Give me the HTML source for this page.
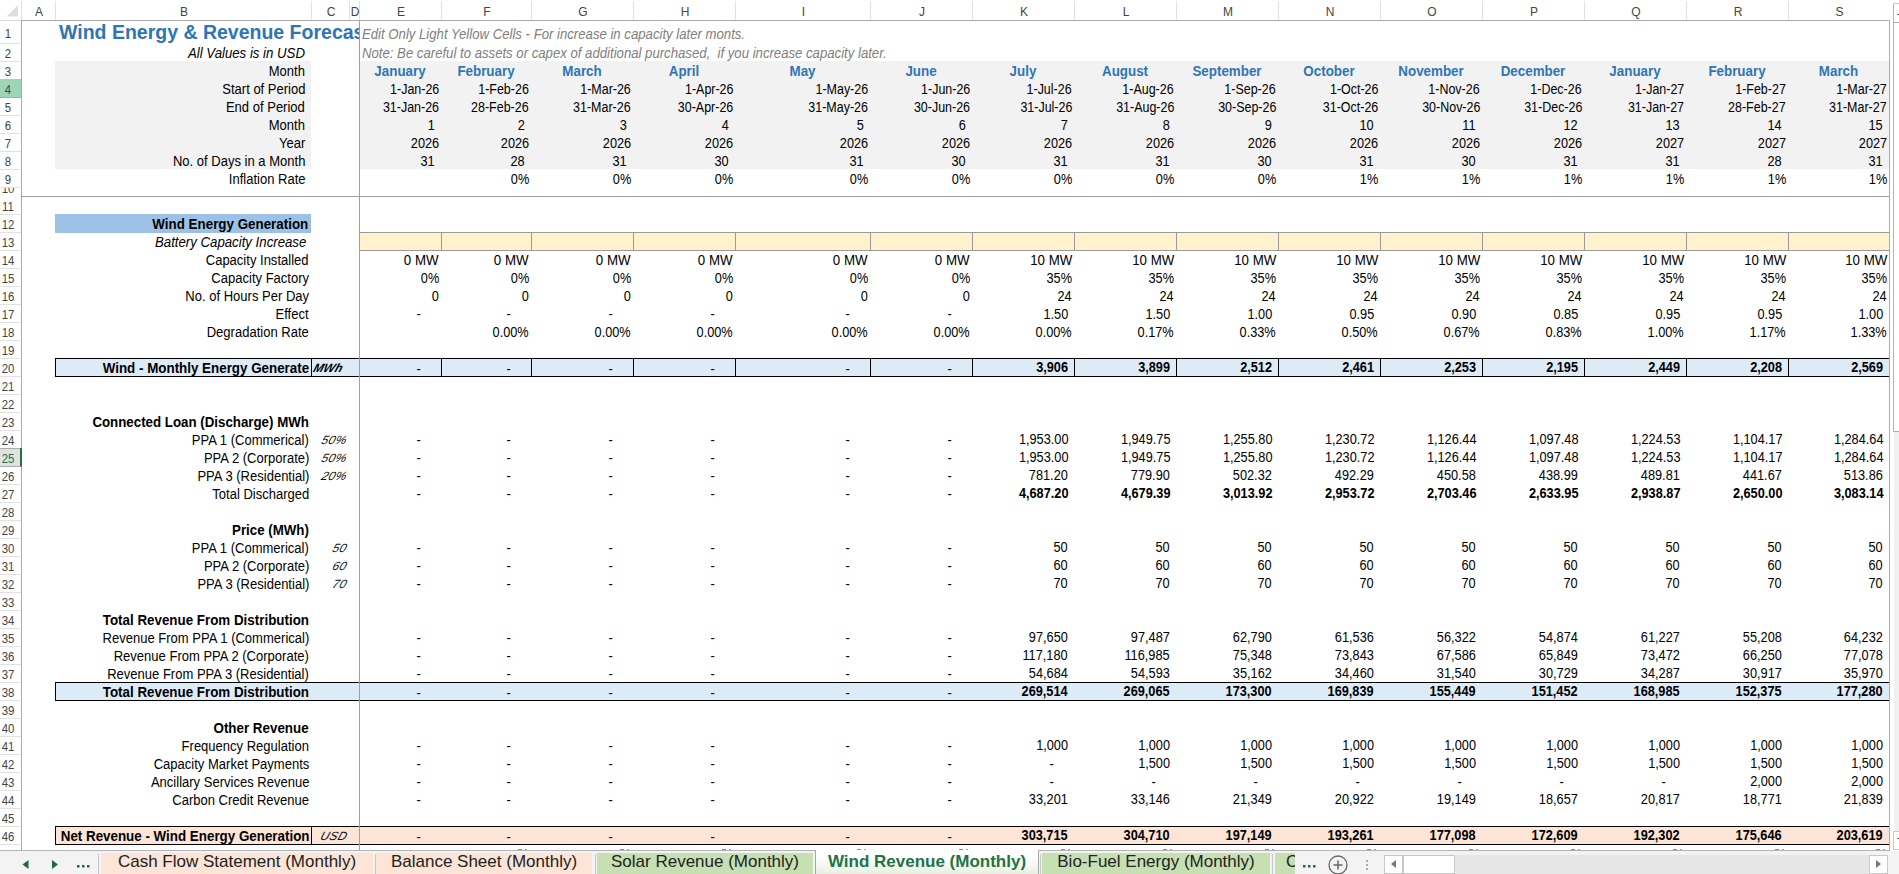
<!DOCTYPE html>
<html><head><meta charset="utf-8"><style>
html,body{margin:0;padding:0;}
body{width:1899px;height:874px;overflow:hidden;position:relative;background:#fff;font-family:"Liberation Sans", sans-serif;}
.grid{position:absolute;left:0;top:0;width:1899px;height:850px;overflow:hidden}
.t{position:absolute;white-space:nowrap;font-size:14px;line-height:18px;height:18px;color:#000}
.title{position:absolute;left:4px;top:0;white-space:nowrap;font-size:19.5px;line-height:23px;font-weight:bold;color:#2e75b6}
.note{color:#808080;font-style:italic;transform:scaleX(0.94);transform-origin:0 50%}
.unit{font-style:italic;font-size:12px;color:#111;letter-spacing:0.3px;transform:skewX(-18deg);transform-origin:0 100%}
.ch{position:absolute;top:2px;height:20px;line-height:20px;text-align:center;font-size:12px;color:#444}
.rh{position:absolute;left:0;width:16px;text-align:center;transform:scaleX(0.95);font-size:12px;color:#444;padding-top:2px;box-sizing:border-box}
.tab{position:absolute;top:852px;height:21px;line-height:20px;text-align:center;font-size:17px;color:#222;white-space:nowrap}
</style></head>
<body>
<div class="grid">
<div style="position:absolute;left:55px;top:61px;width:256px;height:108px;background:#f2f2f2;"></div>
<div style="position:absolute;left:360px;top:61px;width:1529px;height:108px;background:#f2f2f2;"></div>
<div style="position:absolute;left:55px;top:214px;width:256px;height:19px;background:#9bc2e6;"></div>
<div style="position:absolute;left:360px;top:232px;width:1529px;height:19px;background:#fff2cc;"></div>
<div style="position:absolute;left:360px;top:232px;width:1529px;height:1px;background:#9a9a9a;"></div>
<div style="position:absolute;left:360px;top:250px;width:1529px;height:1px;background:#9a9a9a;"></div>
<div style="position:absolute;left:441px;top:232px;width:1px;height:19px;background:#9a9a9a;"></div>
<div style="position:absolute;left:531px;top:232px;width:1px;height:19px;background:#9a9a9a;"></div>
<div style="position:absolute;left:633px;top:232px;width:1px;height:19px;background:#9a9a9a;"></div>
<div style="position:absolute;left:735px;top:232px;width:1px;height:19px;background:#9a9a9a;"></div>
<div style="position:absolute;left:870px;top:232px;width:1px;height:19px;background:#9a9a9a;"></div>
<div style="position:absolute;left:972px;top:232px;width:1px;height:19px;background:#9a9a9a;"></div>
<div style="position:absolute;left:1074px;top:232px;width:1px;height:19px;background:#9a9a9a;"></div>
<div style="position:absolute;left:1176px;top:232px;width:1px;height:19px;background:#9a9a9a;"></div>
<div style="position:absolute;left:1278px;top:232px;width:1px;height:19px;background:#9a9a9a;"></div>
<div style="position:absolute;left:1380px;top:232px;width:1px;height:19px;background:#9a9a9a;"></div>
<div style="position:absolute;left:1482px;top:232px;width:1px;height:19px;background:#9a9a9a;"></div>
<div style="position:absolute;left:1584px;top:232px;width:1px;height:19px;background:#9a9a9a;"></div>
<div style="position:absolute;left:1686px;top:232px;width:1px;height:19px;background:#9a9a9a;"></div>
<div style="position:absolute;left:1788px;top:232px;width:1px;height:19px;background:#9a9a9a;"></div>
<div style="position:absolute;left:55px;top:358px;width:1834px;height:19px;background:#ddebf7;"></div>
<div style="position:absolute;left:55px;top:358px;width:1834px;height:1px;background:#000;"></div>
<div style="position:absolute;left:55px;top:376px;width:1834px;height:1px;background:#000;"></div>
<div style="position:absolute;left:55px;top:358px;width:1px;height:19px;background:#000;"></div>
<div style="position:absolute;left:311px;top:358px;width:1px;height:19px;background:#000;"></div>
<div style="position:absolute;left:441px;top:358px;width:1px;height:19px;background:#000;"></div>
<div style="position:absolute;left:531px;top:358px;width:1px;height:19px;background:#000;"></div>
<div style="position:absolute;left:633px;top:358px;width:1px;height:19px;background:#000;"></div>
<div style="position:absolute;left:735px;top:358px;width:1px;height:19px;background:#000;"></div>
<div style="position:absolute;left:870px;top:358px;width:1px;height:19px;background:#000;"></div>
<div style="position:absolute;left:972px;top:358px;width:1px;height:19px;background:#000;"></div>
<div style="position:absolute;left:1074px;top:358px;width:1px;height:19px;background:#000;"></div>
<div style="position:absolute;left:1176px;top:358px;width:1px;height:19px;background:#000;"></div>
<div style="position:absolute;left:1278px;top:358px;width:1px;height:19px;background:#000;"></div>
<div style="position:absolute;left:1380px;top:358px;width:1px;height:19px;background:#000;"></div>
<div style="position:absolute;left:1482px;top:358px;width:1px;height:19px;background:#000;"></div>
<div style="position:absolute;left:1584px;top:358px;width:1px;height:19px;background:#000;"></div>
<div style="position:absolute;left:1686px;top:358px;width:1px;height:19px;background:#000;"></div>
<div style="position:absolute;left:1788px;top:358px;width:1px;height:19px;background:#000;"></div>
<div style="position:absolute;left:55px;top:682px;width:1834px;height:19px;background:#ddebf7;"></div>
<div style="position:absolute;left:55px;top:682px;width:1834px;height:1px;background:#000;"></div>
<div style="position:absolute;left:55px;top:700px;width:1834px;height:1px;background:#000;"></div>
<div style="position:absolute;left:55px;top:682px;width:1px;height:19px;background:#000;"></div>
<div style="position:absolute;left:55px;top:826px;width:1834px;height:19px;background:#fce4d6;"></div>
<div style="position:absolute;left:55px;top:826px;width:1834px;height:1px;background:#000;"></div>
<div style="position:absolute;left:55px;top:844px;width:1834px;height:1px;background:#000;"></div>
<div style="position:absolute;left:55px;top:826px;width:1px;height:19px;background:#000;"></div>
<div style="position:absolute;left:311px;top:826px;width:1px;height:19px;background:#000;"></div>
<div style="position:absolute;left:55px;top:21px;width:304px;height:23px;overflow:hidden"><div class="title">Wind Energy &amp; Revenue Forecast</div></div>
<div class="t note" style="top:25px;left:362px">Edit Only Light Yellow Cells - For increase in capacity later monts.</div>
<div class="t note" style="top:44px;left:362px">Note: Be careful to assets or capex of additional purchased,&nbsp; if you increase capacity later.</div>
<div class="t" style="top:44px;font-style:italic;right:1594px;transform:scaleX(0.944);transform-origin:100% 50%">All Values is in USD</div>
<div class="t" style="top:62px;right:1594px;transform:scaleX(0.93);transform-origin:100% 50%">Month</div>
<div class="t" style="top:80px;right:1594px;transform:scaleX(0.93);transform-origin:100% 50%">Start of Period</div>
<div class="t" style="top:98px;right:1594px;transform:scaleX(0.93);transform-origin:100% 50%">End of Period</div>
<div class="t" style="top:116px;right:1594px;transform:scaleX(0.93);transform-origin:100% 50%">Month</div>
<div class="t" style="top:134px;right:1594px;transform:scaleX(0.93);transform-origin:100% 50%">Year</div>
<div class="t" style="top:152px;right:1594px;transform:scaleX(0.93);transform-origin:100% 50%">No. of Days in a Month</div>
<div class="t" style="top:170px;right:1594px;transform:scaleX(0.93);transform-origin:100% 50%">Inflation Rate</div>
<div class="t" style="top:62px;font-weight:bold;color:#2e75b6;left:359px;width:82px;text-align:center;transform:scaleX(0.955);transform-origin:50% 50%">January</div>
<div class="t" style="top:80px;right:1460px;transform:scaleX(0.89);transform-origin:100% 50%">1-Jan-26</div>
<div class="t" style="top:98px;right:1460px;transform:scaleX(0.89);transform-origin:100% 50%">31-Jan-26</div>
<div class="t" style="top:116px;right:1464px;transform:scaleX(0.91);transform-origin:100% 50%">1</div>
<div class="t" style="top:134px;right:1460px;transform:scaleX(0.91);transform-origin:100% 50%">2026</div>
<div class="t" style="top:152px;right:1464px;transform:scaleX(0.91);transform-origin:100% 50%">31</div>
<div class="t" style="top:62px;font-weight:bold;color:#2e75b6;left:441px;width:90px;text-align:center;transform:scaleX(0.955);transform-origin:50% 50%">February</div>
<div class="t" style="top:80px;right:1370px;transform:scaleX(0.89);transform-origin:100% 50%">1-Feb-26</div>
<div class="t" style="top:98px;right:1370px;transform:scaleX(0.89);transform-origin:100% 50%">28-Feb-26</div>
<div class="t" style="top:116px;right:1374px;transform:scaleX(0.91);transform-origin:100% 50%">2</div>
<div class="t" style="top:134px;right:1370px;transform:scaleX(0.91);transform-origin:100% 50%">2026</div>
<div class="t" style="top:152px;right:1374px;transform:scaleX(0.91);transform-origin:100% 50%">28</div>
<div class="t" style="top:170px;right:1370px;transform:scaleX(0.91);transform-origin:100% 50%">0%</div>
<div class="t" style="top:62px;font-weight:bold;color:#2e75b6;left:531px;width:102px;text-align:center;transform:scaleX(0.955);transform-origin:50% 50%">March</div>
<div class="t" style="top:80px;right:1268px;transform:scaleX(0.89);transform-origin:100% 50%">1-Mar-26</div>
<div class="t" style="top:98px;right:1268px;transform:scaleX(0.89);transform-origin:100% 50%">31-Mar-26</div>
<div class="t" style="top:116px;right:1272px;transform:scaleX(0.91);transform-origin:100% 50%">3</div>
<div class="t" style="top:134px;right:1268px;transform:scaleX(0.91);transform-origin:100% 50%">2026</div>
<div class="t" style="top:152px;right:1272px;transform:scaleX(0.91);transform-origin:100% 50%">31</div>
<div class="t" style="top:170px;right:1268px;transform:scaleX(0.91);transform-origin:100% 50%">0%</div>
<div class="t" style="top:62px;font-weight:bold;color:#2e75b6;left:633px;width:102px;text-align:center;transform:scaleX(0.955);transform-origin:50% 50%">April</div>
<div class="t" style="top:80px;right:1166px;transform:scaleX(0.89);transform-origin:100% 50%">1-Apr-26</div>
<div class="t" style="top:98px;right:1166px;transform:scaleX(0.89);transform-origin:100% 50%">30-Apr-26</div>
<div class="t" style="top:116px;right:1170px;transform:scaleX(0.91);transform-origin:100% 50%">4</div>
<div class="t" style="top:134px;right:1166px;transform:scaleX(0.91);transform-origin:100% 50%">2026</div>
<div class="t" style="top:152px;right:1170px;transform:scaleX(0.91);transform-origin:100% 50%">30</div>
<div class="t" style="top:170px;right:1166px;transform:scaleX(0.91);transform-origin:100% 50%">0%</div>
<div class="t" style="top:62px;font-weight:bold;color:#2e75b6;left:735px;width:135px;text-align:center;transform:scaleX(0.955);transform-origin:50% 50%">May</div>
<div class="t" style="top:80px;right:1031px;transform:scaleX(0.89);transform-origin:100% 50%">1-May-26</div>
<div class="t" style="top:98px;right:1031px;transform:scaleX(0.89);transform-origin:100% 50%">31-May-26</div>
<div class="t" style="top:116px;right:1035px;transform:scaleX(0.91);transform-origin:100% 50%">5</div>
<div class="t" style="top:134px;right:1031px;transform:scaleX(0.91);transform-origin:100% 50%">2026</div>
<div class="t" style="top:152px;right:1035px;transform:scaleX(0.91);transform-origin:100% 50%">31</div>
<div class="t" style="top:170px;right:1031px;transform:scaleX(0.91);transform-origin:100% 50%">0%</div>
<div class="t" style="top:62px;font-weight:bold;color:#2e75b6;left:870px;width:102px;text-align:center;transform:scaleX(0.955);transform-origin:50% 50%">June</div>
<div class="t" style="top:80px;right:929px;transform:scaleX(0.89);transform-origin:100% 50%">1-Jun-26</div>
<div class="t" style="top:98px;right:929px;transform:scaleX(0.89);transform-origin:100% 50%">30-Jun-26</div>
<div class="t" style="top:116px;right:933px;transform:scaleX(0.91);transform-origin:100% 50%">6</div>
<div class="t" style="top:134px;right:929px;transform:scaleX(0.91);transform-origin:100% 50%">2026</div>
<div class="t" style="top:152px;right:933px;transform:scaleX(0.91);transform-origin:100% 50%">30</div>
<div class="t" style="top:170px;right:929px;transform:scaleX(0.91);transform-origin:100% 50%">0%</div>
<div class="t" style="top:62px;font-weight:bold;color:#2e75b6;left:972px;width:102px;text-align:center;transform:scaleX(0.955);transform-origin:50% 50%">July</div>
<div class="t" style="top:80px;right:827px;transform:scaleX(0.89);transform-origin:100% 50%">1-Jul-26</div>
<div class="t" style="top:98px;right:827px;transform:scaleX(0.89);transform-origin:100% 50%">31-Jul-26</div>
<div class="t" style="top:116px;right:831px;transform:scaleX(0.91);transform-origin:100% 50%">7</div>
<div class="t" style="top:134px;right:827px;transform:scaleX(0.91);transform-origin:100% 50%">2026</div>
<div class="t" style="top:152px;right:831px;transform:scaleX(0.91);transform-origin:100% 50%">31</div>
<div class="t" style="top:170px;right:827px;transform:scaleX(0.91);transform-origin:100% 50%">0%</div>
<div class="t" style="top:62px;font-weight:bold;color:#2e75b6;left:1074px;width:102px;text-align:center;transform:scaleX(0.955);transform-origin:50% 50%">August</div>
<div class="t" style="top:80px;right:725px;transform:scaleX(0.89);transform-origin:100% 50%">1-Aug-26</div>
<div class="t" style="top:98px;right:725px;transform:scaleX(0.89);transform-origin:100% 50%">31-Aug-26</div>
<div class="t" style="top:116px;right:729px;transform:scaleX(0.91);transform-origin:100% 50%">8</div>
<div class="t" style="top:134px;right:725px;transform:scaleX(0.91);transform-origin:100% 50%">2026</div>
<div class="t" style="top:152px;right:729px;transform:scaleX(0.91);transform-origin:100% 50%">31</div>
<div class="t" style="top:170px;right:725px;transform:scaleX(0.91);transform-origin:100% 50%">0%</div>
<div class="t" style="top:62px;font-weight:bold;color:#2e75b6;left:1176px;width:102px;text-align:center;transform:scaleX(0.955);transform-origin:50% 50%">September</div>
<div class="t" style="top:80px;right:623px;transform:scaleX(0.89);transform-origin:100% 50%">1-Sep-26</div>
<div class="t" style="top:98px;right:623px;transform:scaleX(0.89);transform-origin:100% 50%">30-Sep-26</div>
<div class="t" style="top:116px;right:627px;transform:scaleX(0.91);transform-origin:100% 50%">9</div>
<div class="t" style="top:134px;right:623px;transform:scaleX(0.91);transform-origin:100% 50%">2026</div>
<div class="t" style="top:152px;right:627px;transform:scaleX(0.91);transform-origin:100% 50%">30</div>
<div class="t" style="top:170px;right:623px;transform:scaleX(0.91);transform-origin:100% 50%">0%</div>
<div class="t" style="top:62px;font-weight:bold;color:#2e75b6;left:1278px;width:102px;text-align:center;transform:scaleX(0.955);transform-origin:50% 50%">October</div>
<div class="t" style="top:80px;right:521px;transform:scaleX(0.89);transform-origin:100% 50%">1-Oct-26</div>
<div class="t" style="top:98px;right:521px;transform:scaleX(0.89);transform-origin:100% 50%">31-Oct-26</div>
<div class="t" style="top:116px;right:525px;transform:scaleX(0.91);transform-origin:100% 50%">10</div>
<div class="t" style="top:134px;right:521px;transform:scaleX(0.91);transform-origin:100% 50%">2026</div>
<div class="t" style="top:152px;right:525px;transform:scaleX(0.91);transform-origin:100% 50%">31</div>
<div class="t" style="top:170px;right:521px;transform:scaleX(0.91);transform-origin:100% 50%">1%</div>
<div class="t" style="top:62px;font-weight:bold;color:#2e75b6;left:1380px;width:102px;text-align:center;transform:scaleX(0.955);transform-origin:50% 50%">November</div>
<div class="t" style="top:80px;right:419px;transform:scaleX(0.89);transform-origin:100% 50%">1-Nov-26</div>
<div class="t" style="top:98px;right:419px;transform:scaleX(0.89);transform-origin:100% 50%">30-Nov-26</div>
<div class="t" style="top:116px;right:423px;transform:scaleX(0.91);transform-origin:100% 50%">11</div>
<div class="t" style="top:134px;right:419px;transform:scaleX(0.91);transform-origin:100% 50%">2026</div>
<div class="t" style="top:152px;right:423px;transform:scaleX(0.91);transform-origin:100% 50%">30</div>
<div class="t" style="top:170px;right:419px;transform:scaleX(0.91);transform-origin:100% 50%">1%</div>
<div class="t" style="top:62px;font-weight:bold;color:#2e75b6;left:1482px;width:102px;text-align:center;transform:scaleX(0.955);transform-origin:50% 50%">December</div>
<div class="t" style="top:80px;right:317px;transform:scaleX(0.89);transform-origin:100% 50%">1-Dec-26</div>
<div class="t" style="top:98px;right:317px;transform:scaleX(0.89);transform-origin:100% 50%">31-Dec-26</div>
<div class="t" style="top:116px;right:321px;transform:scaleX(0.91);transform-origin:100% 50%">12</div>
<div class="t" style="top:134px;right:317px;transform:scaleX(0.91);transform-origin:100% 50%">2026</div>
<div class="t" style="top:152px;right:321px;transform:scaleX(0.91);transform-origin:100% 50%">31</div>
<div class="t" style="top:170px;right:317px;transform:scaleX(0.91);transform-origin:100% 50%">1%</div>
<div class="t" style="top:62px;font-weight:bold;color:#2e75b6;left:1584px;width:102px;text-align:center;transform:scaleX(0.955);transform-origin:50% 50%">January</div>
<div class="t" style="top:80px;right:215px;transform:scaleX(0.89);transform-origin:100% 50%">1-Jan-27</div>
<div class="t" style="top:98px;right:215px;transform:scaleX(0.89);transform-origin:100% 50%">31-Jan-27</div>
<div class="t" style="top:116px;right:219px;transform:scaleX(0.91);transform-origin:100% 50%">13</div>
<div class="t" style="top:134px;right:215px;transform:scaleX(0.91);transform-origin:100% 50%">2027</div>
<div class="t" style="top:152px;right:219px;transform:scaleX(0.91);transform-origin:100% 50%">31</div>
<div class="t" style="top:170px;right:215px;transform:scaleX(0.91);transform-origin:100% 50%">1%</div>
<div class="t" style="top:62px;font-weight:bold;color:#2e75b6;left:1686px;width:102px;text-align:center;transform:scaleX(0.955);transform-origin:50% 50%">February</div>
<div class="t" style="top:80px;right:113px;transform:scaleX(0.89);transform-origin:100% 50%">1-Feb-27</div>
<div class="t" style="top:98px;right:113px;transform:scaleX(0.89);transform-origin:100% 50%">28-Feb-27</div>
<div class="t" style="top:116px;right:117px;transform:scaleX(0.91);transform-origin:100% 50%">14</div>
<div class="t" style="top:134px;right:113px;transform:scaleX(0.91);transform-origin:100% 50%">2027</div>
<div class="t" style="top:152px;right:117px;transform:scaleX(0.91);transform-origin:100% 50%">28</div>
<div class="t" style="top:170px;right:113px;transform:scaleX(0.91);transform-origin:100% 50%">1%</div>
<div class="t" style="top:62px;font-weight:bold;color:#2e75b6;left:1788px;width:101px;text-align:center;transform:scaleX(0.955);transform-origin:50% 50%">March</div>
<div class="t" style="top:80px;right:12px;transform:scaleX(0.89);transform-origin:100% 50%">1-Mar-27</div>
<div class="t" style="top:98px;right:12px;transform:scaleX(0.89);transform-origin:100% 50%">31-Mar-27</div>
<div class="t" style="top:116px;right:16px;transform:scaleX(0.91);transform-origin:100% 50%">15</div>
<div class="t" style="top:134px;right:12px;transform:scaleX(0.91);transform-origin:100% 50%">2027</div>
<div class="t" style="top:152px;right:16px;transform:scaleX(0.91);transform-origin:100% 50%">31</div>
<div class="t" style="top:170px;right:12px;transform:scaleX(0.91);transform-origin:100% 50%">1%</div>
<div class="t" style="top:215px;font-weight:bold;right:1591px;transform:scaleX(0.955);transform-origin:100% 50%">Wind Energy Generation</div>
<div class="t" style="top:233px;font-style:italic;right:1593px;transform:scaleX(0.944);transform-origin:100% 50%">Battery Capacity Increase</div>
<div class="t" style="top:251px;right:1590px;transform:scaleX(0.93);transform-origin:100% 50%">Capacity Installed</div>
<div class="t" style="top:269px;right:1590px;transform:scaleX(0.93);transform-origin:100% 50%">Capacity Factory</div>
<div class="t" style="top:287px;right:1590px;transform:scaleX(0.93);transform-origin:100% 50%">No. of Hours Per Day</div>
<div class="t" style="top:305px;right:1590px;transform:scaleX(0.93);transform-origin:100% 50%">Effect</div>
<div class="t" style="top:323px;right:1590px;transform:scaleX(0.93);transform-origin:100% 50%">Degradation Rate</div>
<div class="t" style="top:251px;right:1460px;transform:scaleX(0.95);transform-origin:100% 50%">0 MW</div>
<div class="t" style="top:269px;right:1460px;transform:scaleX(0.91);transform-origin:100% 50%">0%</div>
<div class="t" style="top:287px;right:1460px;transform:scaleX(0.91);transform-origin:100% 50%">0</div>
<div class="t" style="top:305px;right:1478px;transform:scaleX(0.91);transform-origin:100% 50%">-</div>
<div class="t" style="top:251px;right:1370px;transform:scaleX(0.95);transform-origin:100% 50%">0 MW</div>
<div class="t" style="top:269px;right:1370px;transform:scaleX(0.91);transform-origin:100% 50%">0%</div>
<div class="t" style="top:287px;right:1370px;transform:scaleX(0.91);transform-origin:100% 50%">0</div>
<div class="t" style="top:305px;right:1388px;transform:scaleX(0.91);transform-origin:100% 50%">-</div>
<div class="t" style="top:323px;right:1370px;transform:scaleX(0.91);transform-origin:100% 50%">0.00%</div>
<div class="t" style="top:251px;right:1268px;transform:scaleX(0.95);transform-origin:100% 50%">0 MW</div>
<div class="t" style="top:269px;right:1268px;transform:scaleX(0.91);transform-origin:100% 50%">0%</div>
<div class="t" style="top:287px;right:1268px;transform:scaleX(0.91);transform-origin:100% 50%">0</div>
<div class="t" style="top:305px;right:1286px;transform:scaleX(0.91);transform-origin:100% 50%">-</div>
<div class="t" style="top:323px;right:1268px;transform:scaleX(0.91);transform-origin:100% 50%">0.00%</div>
<div class="t" style="top:251px;right:1166px;transform:scaleX(0.95);transform-origin:100% 50%">0 MW</div>
<div class="t" style="top:269px;right:1166px;transform:scaleX(0.91);transform-origin:100% 50%">0%</div>
<div class="t" style="top:287px;right:1166px;transform:scaleX(0.91);transform-origin:100% 50%">0</div>
<div class="t" style="top:305px;right:1184px;transform:scaleX(0.91);transform-origin:100% 50%">-</div>
<div class="t" style="top:323px;right:1166px;transform:scaleX(0.91);transform-origin:100% 50%">0.00%</div>
<div class="t" style="top:251px;right:1031px;transform:scaleX(0.95);transform-origin:100% 50%">0 MW</div>
<div class="t" style="top:269px;right:1031px;transform:scaleX(0.91);transform-origin:100% 50%">0%</div>
<div class="t" style="top:287px;right:1031px;transform:scaleX(0.91);transform-origin:100% 50%">0</div>
<div class="t" style="top:305px;right:1049px;transform:scaleX(0.91);transform-origin:100% 50%">-</div>
<div class="t" style="top:323px;right:1031px;transform:scaleX(0.91);transform-origin:100% 50%">0.00%</div>
<div class="t" style="top:251px;right:929px;transform:scaleX(0.95);transform-origin:100% 50%">0 MW</div>
<div class="t" style="top:269px;right:929px;transform:scaleX(0.91);transform-origin:100% 50%">0%</div>
<div class="t" style="top:287px;right:929px;transform:scaleX(0.91);transform-origin:100% 50%">0</div>
<div class="t" style="top:305px;right:947px;transform:scaleX(0.91);transform-origin:100% 50%">-</div>
<div class="t" style="top:323px;right:929px;transform:scaleX(0.91);transform-origin:100% 50%">0.00%</div>
<div class="t" style="top:251px;right:827px;transform:scaleX(0.95);transform-origin:100% 50%">10 MW</div>
<div class="t" style="top:269px;right:827px;transform:scaleX(0.91);transform-origin:100% 50%">35%</div>
<div class="t" style="top:287px;right:827px;transform:scaleX(0.91);transform-origin:100% 50%">24</div>
<div class="t" style="top:305px;right:831px;transform:scaleX(0.91);transform-origin:100% 50%">1.50</div>
<div class="t" style="top:323px;right:827px;transform:scaleX(0.91);transform-origin:100% 50%">0.00%</div>
<div class="t" style="top:251px;right:725px;transform:scaleX(0.95);transform-origin:100% 50%">10 MW</div>
<div class="t" style="top:269px;right:725px;transform:scaleX(0.91);transform-origin:100% 50%">35%</div>
<div class="t" style="top:287px;right:725px;transform:scaleX(0.91);transform-origin:100% 50%">24</div>
<div class="t" style="top:305px;right:729px;transform:scaleX(0.91);transform-origin:100% 50%">1.50</div>
<div class="t" style="top:323px;right:725px;transform:scaleX(0.91);transform-origin:100% 50%">0.17%</div>
<div class="t" style="top:251px;right:623px;transform:scaleX(0.95);transform-origin:100% 50%">10 MW</div>
<div class="t" style="top:269px;right:623px;transform:scaleX(0.91);transform-origin:100% 50%">35%</div>
<div class="t" style="top:287px;right:623px;transform:scaleX(0.91);transform-origin:100% 50%">24</div>
<div class="t" style="top:305px;right:627px;transform:scaleX(0.91);transform-origin:100% 50%">1.00</div>
<div class="t" style="top:323px;right:623px;transform:scaleX(0.91);transform-origin:100% 50%">0.33%</div>
<div class="t" style="top:251px;right:521px;transform:scaleX(0.95);transform-origin:100% 50%">10 MW</div>
<div class="t" style="top:269px;right:521px;transform:scaleX(0.91);transform-origin:100% 50%">35%</div>
<div class="t" style="top:287px;right:521px;transform:scaleX(0.91);transform-origin:100% 50%">24</div>
<div class="t" style="top:305px;right:525px;transform:scaleX(0.91);transform-origin:100% 50%">0.95</div>
<div class="t" style="top:323px;right:521px;transform:scaleX(0.91);transform-origin:100% 50%">0.50%</div>
<div class="t" style="top:251px;right:419px;transform:scaleX(0.95);transform-origin:100% 50%">10 MW</div>
<div class="t" style="top:269px;right:419px;transform:scaleX(0.91);transform-origin:100% 50%">35%</div>
<div class="t" style="top:287px;right:419px;transform:scaleX(0.91);transform-origin:100% 50%">24</div>
<div class="t" style="top:305px;right:423px;transform:scaleX(0.91);transform-origin:100% 50%">0.90</div>
<div class="t" style="top:323px;right:419px;transform:scaleX(0.91);transform-origin:100% 50%">0.67%</div>
<div class="t" style="top:251px;right:317px;transform:scaleX(0.95);transform-origin:100% 50%">10 MW</div>
<div class="t" style="top:269px;right:317px;transform:scaleX(0.91);transform-origin:100% 50%">35%</div>
<div class="t" style="top:287px;right:317px;transform:scaleX(0.91);transform-origin:100% 50%">24</div>
<div class="t" style="top:305px;right:321px;transform:scaleX(0.91);transform-origin:100% 50%">0.85</div>
<div class="t" style="top:323px;right:317px;transform:scaleX(0.91);transform-origin:100% 50%">0.83%</div>
<div class="t" style="top:251px;right:215px;transform:scaleX(0.95);transform-origin:100% 50%">10 MW</div>
<div class="t" style="top:269px;right:215px;transform:scaleX(0.91);transform-origin:100% 50%">35%</div>
<div class="t" style="top:287px;right:215px;transform:scaleX(0.91);transform-origin:100% 50%">24</div>
<div class="t" style="top:305px;right:219px;transform:scaleX(0.91);transform-origin:100% 50%">0.95</div>
<div class="t" style="top:323px;right:215px;transform:scaleX(0.91);transform-origin:100% 50%">1.00%</div>
<div class="t" style="top:251px;right:113px;transform:scaleX(0.95);transform-origin:100% 50%">10 MW</div>
<div class="t" style="top:269px;right:113px;transform:scaleX(0.91);transform-origin:100% 50%">35%</div>
<div class="t" style="top:287px;right:113px;transform:scaleX(0.91);transform-origin:100% 50%">24</div>
<div class="t" style="top:305px;right:117px;transform:scaleX(0.91);transform-origin:100% 50%">0.95</div>
<div class="t" style="top:323px;right:113px;transform:scaleX(0.91);transform-origin:100% 50%">1.17%</div>
<div class="t" style="top:251px;right:12px;transform:scaleX(0.95);transform-origin:100% 50%">10 MW</div>
<div class="t" style="top:269px;right:12px;transform:scaleX(0.91);transform-origin:100% 50%">35%</div>
<div class="t" style="top:287px;right:12px;transform:scaleX(0.91);transform-origin:100% 50%">24</div>
<div class="t" style="top:305px;right:16px;transform:scaleX(0.91);transform-origin:100% 50%">1.00</div>
<div class="t" style="top:323px;right:12px;transform:scaleX(0.91);transform-origin:100% 50%">1.33%</div>
<div class="t" style="top:359px;font-weight:bold;right:1590px;transform:scaleX(0.955);transform-origin:100% 50%">Wind - Monthly Energy Generate</div>
<div class="t unit" style="top:359px;left:311px;font-weight:bold;color:#000;letter-spacing:0">MWh</div>
<div class="t" style="top:360px;right:1478px;transform:scaleX(0.91);transform-origin:100% 50%">-</div>
<div class="t" style="top:360px;right:1388px;transform:scaleX(0.91);transform-origin:100% 50%">-</div>
<div class="t" style="top:360px;right:1286px;transform:scaleX(0.91);transform-origin:100% 50%">-</div>
<div class="t" style="top:360px;right:1184px;transform:scaleX(0.91);transform-origin:100% 50%">-</div>
<div class="t" style="top:360px;right:1049px;transform:scaleX(0.91);transform-origin:100% 50%">-</div>
<div class="t" style="top:360px;right:947px;transform:scaleX(0.91);transform-origin:100% 50%">-</div>
<div class="t" style="top:358px;font-weight:bold;right:831px;transform:scaleX(0.91);transform-origin:100% 50%">3,906</div>
<div class="t" style="top:358px;font-weight:bold;right:729px;transform:scaleX(0.91);transform-origin:100% 50%">3,899</div>
<div class="t" style="top:358px;font-weight:bold;right:627px;transform:scaleX(0.91);transform-origin:100% 50%">2,512</div>
<div class="t" style="top:358px;font-weight:bold;right:525px;transform:scaleX(0.91);transform-origin:100% 50%">2,461</div>
<div class="t" style="top:358px;font-weight:bold;right:423px;transform:scaleX(0.91);transform-origin:100% 50%">2,253</div>
<div class="t" style="top:358px;font-weight:bold;right:321px;transform:scaleX(0.91);transform-origin:100% 50%">2,195</div>
<div class="t" style="top:358px;font-weight:bold;right:219px;transform:scaleX(0.91);transform-origin:100% 50%">2,449</div>
<div class="t" style="top:358px;font-weight:bold;right:117px;transform:scaleX(0.91);transform-origin:100% 50%">2,208</div>
<div class="t" style="top:358px;font-weight:bold;right:16px;transform:scaleX(0.91);transform-origin:100% 50%">2,569</div>
<div class="t" style="top:413px;font-weight:bold;right:1590px;transform:scaleX(0.95);transform-origin:100% 50%">Connected Loan (Discharge) MWh</div>
<div class="t" style="top:431px;right:1590px;transform:scaleX(0.93);transform-origin:100% 50%">PPA 1 (Commerical)</div>
<div class="t" style="top:449px;right:1590px;transform:scaleX(0.93);transform-origin:100% 50%">PPA 2 (Corporate)</div>
<div class="t" style="top:467px;right:1590px;transform:scaleX(0.93);transform-origin:100% 50%">PPA 3 (Residential)</div>
<div class="t" style="top:485px;right:1590px;transform:scaleX(0.93);transform-origin:100% 50%">Total Discharged</div>
<div class="t unit" style="top:431px;right:1555px">50%</div>
<div class="t unit" style="top:449px;right:1555px">50%</div>
<div class="t unit" style="top:467px;right:1555px">20%</div>
<div class="t" style="top:431px;right:1478px;transform:scaleX(0.91);transform-origin:100% 50%">-</div>
<div class="t" style="top:449px;right:1478px;transform:scaleX(0.91);transform-origin:100% 50%">-</div>
<div class="t" style="top:467px;right:1478px;transform:scaleX(0.91);transform-origin:100% 50%">-</div>
<div class="t" style="top:485px;right:1478px;transform:scaleX(0.91);transform-origin:100% 50%">-</div>
<div class="t" style="top:431px;right:1388px;transform:scaleX(0.91);transform-origin:100% 50%">-</div>
<div class="t" style="top:449px;right:1388px;transform:scaleX(0.91);transform-origin:100% 50%">-</div>
<div class="t" style="top:467px;right:1388px;transform:scaleX(0.91);transform-origin:100% 50%">-</div>
<div class="t" style="top:485px;right:1388px;transform:scaleX(0.91);transform-origin:100% 50%">-</div>
<div class="t" style="top:431px;right:1286px;transform:scaleX(0.91);transform-origin:100% 50%">-</div>
<div class="t" style="top:449px;right:1286px;transform:scaleX(0.91);transform-origin:100% 50%">-</div>
<div class="t" style="top:467px;right:1286px;transform:scaleX(0.91);transform-origin:100% 50%">-</div>
<div class="t" style="top:485px;right:1286px;transform:scaleX(0.91);transform-origin:100% 50%">-</div>
<div class="t" style="top:431px;right:1184px;transform:scaleX(0.91);transform-origin:100% 50%">-</div>
<div class="t" style="top:449px;right:1184px;transform:scaleX(0.91);transform-origin:100% 50%">-</div>
<div class="t" style="top:467px;right:1184px;transform:scaleX(0.91);transform-origin:100% 50%">-</div>
<div class="t" style="top:485px;right:1184px;transform:scaleX(0.91);transform-origin:100% 50%">-</div>
<div class="t" style="top:431px;right:1049px;transform:scaleX(0.91);transform-origin:100% 50%">-</div>
<div class="t" style="top:449px;right:1049px;transform:scaleX(0.91);transform-origin:100% 50%">-</div>
<div class="t" style="top:467px;right:1049px;transform:scaleX(0.91);transform-origin:100% 50%">-</div>
<div class="t" style="top:485px;right:1049px;transform:scaleX(0.91);transform-origin:100% 50%">-</div>
<div class="t" style="top:431px;right:947px;transform:scaleX(0.91);transform-origin:100% 50%">-</div>
<div class="t" style="top:449px;right:947px;transform:scaleX(0.91);transform-origin:100% 50%">-</div>
<div class="t" style="top:467px;right:947px;transform:scaleX(0.91);transform-origin:100% 50%">-</div>
<div class="t" style="top:485px;right:947px;transform:scaleX(0.91);transform-origin:100% 50%">-</div>
<div class="t" style="top:430px;right:831px;transform:scaleX(0.91);transform-origin:100% 50%">1,953.00</div>
<div class="t" style="top:448px;right:831px;transform:scaleX(0.91);transform-origin:100% 50%">1,953.00</div>
<div class="t" style="top:466px;right:831px;transform:scaleX(0.91);transform-origin:100% 50%">781.20</div>
<div class="t" style="top:484px;font-weight:bold;right:831px;transform:scaleX(0.91);transform-origin:100% 50%">4,687.20</div>
<div class="t" style="top:430px;right:729px;transform:scaleX(0.91);transform-origin:100% 50%">1,949.75</div>
<div class="t" style="top:448px;right:729px;transform:scaleX(0.91);transform-origin:100% 50%">1,949.75</div>
<div class="t" style="top:466px;right:729px;transform:scaleX(0.91);transform-origin:100% 50%">779.90</div>
<div class="t" style="top:484px;font-weight:bold;right:729px;transform:scaleX(0.91);transform-origin:100% 50%">4,679.39</div>
<div class="t" style="top:430px;right:627px;transform:scaleX(0.91);transform-origin:100% 50%">1,255.80</div>
<div class="t" style="top:448px;right:627px;transform:scaleX(0.91);transform-origin:100% 50%">1,255.80</div>
<div class="t" style="top:466px;right:627px;transform:scaleX(0.91);transform-origin:100% 50%">502.32</div>
<div class="t" style="top:484px;font-weight:bold;right:627px;transform:scaleX(0.91);transform-origin:100% 50%">3,013.92</div>
<div class="t" style="top:430px;right:525px;transform:scaleX(0.91);transform-origin:100% 50%">1,230.72</div>
<div class="t" style="top:448px;right:525px;transform:scaleX(0.91);transform-origin:100% 50%">1,230.72</div>
<div class="t" style="top:466px;right:525px;transform:scaleX(0.91);transform-origin:100% 50%">492.29</div>
<div class="t" style="top:484px;font-weight:bold;right:525px;transform:scaleX(0.91);transform-origin:100% 50%">2,953.72</div>
<div class="t" style="top:430px;right:423px;transform:scaleX(0.91);transform-origin:100% 50%">1,126.44</div>
<div class="t" style="top:448px;right:423px;transform:scaleX(0.91);transform-origin:100% 50%">1,126.44</div>
<div class="t" style="top:466px;right:423px;transform:scaleX(0.91);transform-origin:100% 50%">450.58</div>
<div class="t" style="top:484px;font-weight:bold;right:423px;transform:scaleX(0.91);transform-origin:100% 50%">2,703.46</div>
<div class="t" style="top:430px;right:321px;transform:scaleX(0.91);transform-origin:100% 50%">1,097.48</div>
<div class="t" style="top:448px;right:321px;transform:scaleX(0.91);transform-origin:100% 50%">1,097.48</div>
<div class="t" style="top:466px;right:321px;transform:scaleX(0.91);transform-origin:100% 50%">438.99</div>
<div class="t" style="top:484px;font-weight:bold;right:321px;transform:scaleX(0.91);transform-origin:100% 50%">2,633.95</div>
<div class="t" style="top:430px;right:219px;transform:scaleX(0.91);transform-origin:100% 50%">1,224.53</div>
<div class="t" style="top:448px;right:219px;transform:scaleX(0.91);transform-origin:100% 50%">1,224.53</div>
<div class="t" style="top:466px;right:219px;transform:scaleX(0.91);transform-origin:100% 50%">489.81</div>
<div class="t" style="top:484px;font-weight:bold;right:219px;transform:scaleX(0.91);transform-origin:100% 50%">2,938.87</div>
<div class="t" style="top:430px;right:117px;transform:scaleX(0.91);transform-origin:100% 50%">1,104.17</div>
<div class="t" style="top:448px;right:117px;transform:scaleX(0.91);transform-origin:100% 50%">1,104.17</div>
<div class="t" style="top:466px;right:117px;transform:scaleX(0.91);transform-origin:100% 50%">441.67</div>
<div class="t" style="top:484px;font-weight:bold;right:117px;transform:scaleX(0.91);transform-origin:100% 50%">2,650.00</div>
<div class="t" style="top:430px;right:16px;transform:scaleX(0.91);transform-origin:100% 50%">1,284.64</div>
<div class="t" style="top:448px;right:16px;transform:scaleX(0.91);transform-origin:100% 50%">1,284.64</div>
<div class="t" style="top:466px;right:16px;transform:scaleX(0.91);transform-origin:100% 50%">513.86</div>
<div class="t" style="top:484px;font-weight:bold;right:16px;transform:scaleX(0.91);transform-origin:100% 50%">3,083.14</div>
<div class="t" style="top:521px;font-weight:bold;right:1590px;transform:scaleX(0.95);transform-origin:100% 50%">Price (MWh)</div>
<div class="t" style="top:539px;right:1590px;transform:scaleX(0.93);transform-origin:100% 50%">PPA 1 (Commerical)</div>
<div class="t" style="top:557px;right:1590px;transform:scaleX(0.93);transform-origin:100% 50%">PPA 2 (Corporate)</div>
<div class="t" style="top:575px;right:1590px;transform:scaleX(0.93);transform-origin:100% 50%">PPA 3 (Residential)</div>
<div class="t unit" style="top:539px;right:1555px">50</div>
<div class="t unit" style="top:557px;right:1555px">60</div>
<div class="t unit" style="top:575px;right:1555px">70</div>
<div class="t" style="top:539px;right:1478px;transform:scaleX(0.91);transform-origin:100% 50%">-</div>
<div class="t" style="top:557px;right:1478px;transform:scaleX(0.91);transform-origin:100% 50%">-</div>
<div class="t" style="top:575px;right:1478px;transform:scaleX(0.91);transform-origin:100% 50%">-</div>
<div class="t" style="top:539px;right:1388px;transform:scaleX(0.91);transform-origin:100% 50%">-</div>
<div class="t" style="top:557px;right:1388px;transform:scaleX(0.91);transform-origin:100% 50%">-</div>
<div class="t" style="top:575px;right:1388px;transform:scaleX(0.91);transform-origin:100% 50%">-</div>
<div class="t" style="top:539px;right:1286px;transform:scaleX(0.91);transform-origin:100% 50%">-</div>
<div class="t" style="top:557px;right:1286px;transform:scaleX(0.91);transform-origin:100% 50%">-</div>
<div class="t" style="top:575px;right:1286px;transform:scaleX(0.91);transform-origin:100% 50%">-</div>
<div class="t" style="top:539px;right:1184px;transform:scaleX(0.91);transform-origin:100% 50%">-</div>
<div class="t" style="top:557px;right:1184px;transform:scaleX(0.91);transform-origin:100% 50%">-</div>
<div class="t" style="top:575px;right:1184px;transform:scaleX(0.91);transform-origin:100% 50%">-</div>
<div class="t" style="top:539px;right:1049px;transform:scaleX(0.91);transform-origin:100% 50%">-</div>
<div class="t" style="top:557px;right:1049px;transform:scaleX(0.91);transform-origin:100% 50%">-</div>
<div class="t" style="top:575px;right:1049px;transform:scaleX(0.91);transform-origin:100% 50%">-</div>
<div class="t" style="top:539px;right:947px;transform:scaleX(0.91);transform-origin:100% 50%">-</div>
<div class="t" style="top:557px;right:947px;transform:scaleX(0.91);transform-origin:100% 50%">-</div>
<div class="t" style="top:575px;right:947px;transform:scaleX(0.91);transform-origin:100% 50%">-</div>
<div class="t" style="top:538px;right:831px;transform:scaleX(0.91);transform-origin:100% 50%">50</div>
<div class="t" style="top:556px;right:831px;transform:scaleX(0.91);transform-origin:100% 50%">60</div>
<div class="t" style="top:574px;right:831px;transform:scaleX(0.91);transform-origin:100% 50%">70</div>
<div class="t" style="top:538px;right:729px;transform:scaleX(0.91);transform-origin:100% 50%">50</div>
<div class="t" style="top:556px;right:729px;transform:scaleX(0.91);transform-origin:100% 50%">60</div>
<div class="t" style="top:574px;right:729px;transform:scaleX(0.91);transform-origin:100% 50%">70</div>
<div class="t" style="top:538px;right:627px;transform:scaleX(0.91);transform-origin:100% 50%">50</div>
<div class="t" style="top:556px;right:627px;transform:scaleX(0.91);transform-origin:100% 50%">60</div>
<div class="t" style="top:574px;right:627px;transform:scaleX(0.91);transform-origin:100% 50%">70</div>
<div class="t" style="top:538px;right:525px;transform:scaleX(0.91);transform-origin:100% 50%">50</div>
<div class="t" style="top:556px;right:525px;transform:scaleX(0.91);transform-origin:100% 50%">60</div>
<div class="t" style="top:574px;right:525px;transform:scaleX(0.91);transform-origin:100% 50%">70</div>
<div class="t" style="top:538px;right:423px;transform:scaleX(0.91);transform-origin:100% 50%">50</div>
<div class="t" style="top:556px;right:423px;transform:scaleX(0.91);transform-origin:100% 50%">60</div>
<div class="t" style="top:574px;right:423px;transform:scaleX(0.91);transform-origin:100% 50%">70</div>
<div class="t" style="top:538px;right:321px;transform:scaleX(0.91);transform-origin:100% 50%">50</div>
<div class="t" style="top:556px;right:321px;transform:scaleX(0.91);transform-origin:100% 50%">60</div>
<div class="t" style="top:574px;right:321px;transform:scaleX(0.91);transform-origin:100% 50%">70</div>
<div class="t" style="top:538px;right:219px;transform:scaleX(0.91);transform-origin:100% 50%">50</div>
<div class="t" style="top:556px;right:219px;transform:scaleX(0.91);transform-origin:100% 50%">60</div>
<div class="t" style="top:574px;right:219px;transform:scaleX(0.91);transform-origin:100% 50%">70</div>
<div class="t" style="top:538px;right:117px;transform:scaleX(0.91);transform-origin:100% 50%">50</div>
<div class="t" style="top:556px;right:117px;transform:scaleX(0.91);transform-origin:100% 50%">60</div>
<div class="t" style="top:574px;right:117px;transform:scaleX(0.91);transform-origin:100% 50%">70</div>
<div class="t" style="top:538px;right:16px;transform:scaleX(0.91);transform-origin:100% 50%">50</div>
<div class="t" style="top:556px;right:16px;transform:scaleX(0.91);transform-origin:100% 50%">60</div>
<div class="t" style="top:574px;right:16px;transform:scaleX(0.91);transform-origin:100% 50%">70</div>
<div class="t" style="top:611px;font-weight:bold;right:1590px;transform:scaleX(0.955);transform-origin:100% 50%">Total Revenue From Distribution</div>
<div class="t" style="top:629px;right:1590px;transform:scaleX(0.93);transform-origin:100% 50%">Revenue From PPA 1 (Commerical)</div>
<div class="t" style="top:647px;right:1590px;transform:scaleX(0.93);transform-origin:100% 50%">Revenue From PPA 2 (Corporate)</div>
<div class="t" style="top:665px;right:1590px;transform:scaleX(0.93);transform-origin:100% 50%">Revenue From PPA 3 (Residential)</div>
<div class="t" style="top:683px;font-weight:bold;right:1590px;transform:scaleX(0.955);transform-origin:100% 50%">Total Revenue From Distribution</div>
<div class="t" style="top:629px;right:1478px;transform:scaleX(0.91);transform-origin:100% 50%">-</div>
<div class="t" style="top:647px;right:1478px;transform:scaleX(0.91);transform-origin:100% 50%">-</div>
<div class="t" style="top:665px;right:1478px;transform:scaleX(0.91);transform-origin:100% 50%">-</div>
<div class="t" style="top:684px;right:1478px;transform:scaleX(0.91);transform-origin:100% 50%">-</div>
<div class="t" style="top:629px;right:1388px;transform:scaleX(0.91);transform-origin:100% 50%">-</div>
<div class="t" style="top:647px;right:1388px;transform:scaleX(0.91);transform-origin:100% 50%">-</div>
<div class="t" style="top:665px;right:1388px;transform:scaleX(0.91);transform-origin:100% 50%">-</div>
<div class="t" style="top:684px;right:1388px;transform:scaleX(0.91);transform-origin:100% 50%">-</div>
<div class="t" style="top:629px;right:1286px;transform:scaleX(0.91);transform-origin:100% 50%">-</div>
<div class="t" style="top:647px;right:1286px;transform:scaleX(0.91);transform-origin:100% 50%">-</div>
<div class="t" style="top:665px;right:1286px;transform:scaleX(0.91);transform-origin:100% 50%">-</div>
<div class="t" style="top:684px;right:1286px;transform:scaleX(0.91);transform-origin:100% 50%">-</div>
<div class="t" style="top:629px;right:1184px;transform:scaleX(0.91);transform-origin:100% 50%">-</div>
<div class="t" style="top:647px;right:1184px;transform:scaleX(0.91);transform-origin:100% 50%">-</div>
<div class="t" style="top:665px;right:1184px;transform:scaleX(0.91);transform-origin:100% 50%">-</div>
<div class="t" style="top:684px;right:1184px;transform:scaleX(0.91);transform-origin:100% 50%">-</div>
<div class="t" style="top:629px;right:1049px;transform:scaleX(0.91);transform-origin:100% 50%">-</div>
<div class="t" style="top:647px;right:1049px;transform:scaleX(0.91);transform-origin:100% 50%">-</div>
<div class="t" style="top:665px;right:1049px;transform:scaleX(0.91);transform-origin:100% 50%">-</div>
<div class="t" style="top:684px;right:1049px;transform:scaleX(0.91);transform-origin:100% 50%">-</div>
<div class="t" style="top:629px;right:947px;transform:scaleX(0.91);transform-origin:100% 50%">-</div>
<div class="t" style="top:647px;right:947px;transform:scaleX(0.91);transform-origin:100% 50%">-</div>
<div class="t" style="top:665px;right:947px;transform:scaleX(0.91);transform-origin:100% 50%">-</div>
<div class="t" style="top:684px;right:947px;transform:scaleX(0.91);transform-origin:100% 50%">-</div>
<div class="t" style="top:628px;right:831px;transform:scaleX(0.91);transform-origin:100% 50%">97,650</div>
<div class="t" style="top:646px;right:831px;transform:scaleX(0.91);transform-origin:100% 50%">117,180</div>
<div class="t" style="top:664px;right:831px;transform:scaleX(0.91);transform-origin:100% 50%">54,684</div>
<div class="t" style="top:682px;font-weight:bold;right:831px;transform:scaleX(0.91);transform-origin:100% 50%">269,514</div>
<div class="t" style="top:628px;right:729px;transform:scaleX(0.91);transform-origin:100% 50%">97,487</div>
<div class="t" style="top:646px;right:729px;transform:scaleX(0.91);transform-origin:100% 50%">116,985</div>
<div class="t" style="top:664px;right:729px;transform:scaleX(0.91);transform-origin:100% 50%">54,593</div>
<div class="t" style="top:682px;font-weight:bold;right:729px;transform:scaleX(0.91);transform-origin:100% 50%">269,065</div>
<div class="t" style="top:628px;right:627px;transform:scaleX(0.91);transform-origin:100% 50%">62,790</div>
<div class="t" style="top:646px;right:627px;transform:scaleX(0.91);transform-origin:100% 50%">75,348</div>
<div class="t" style="top:664px;right:627px;transform:scaleX(0.91);transform-origin:100% 50%">35,162</div>
<div class="t" style="top:682px;font-weight:bold;right:627px;transform:scaleX(0.91);transform-origin:100% 50%">173,300</div>
<div class="t" style="top:628px;right:525px;transform:scaleX(0.91);transform-origin:100% 50%">61,536</div>
<div class="t" style="top:646px;right:525px;transform:scaleX(0.91);transform-origin:100% 50%">73,843</div>
<div class="t" style="top:664px;right:525px;transform:scaleX(0.91);transform-origin:100% 50%">34,460</div>
<div class="t" style="top:682px;font-weight:bold;right:525px;transform:scaleX(0.91);transform-origin:100% 50%">169,839</div>
<div class="t" style="top:628px;right:423px;transform:scaleX(0.91);transform-origin:100% 50%">56,322</div>
<div class="t" style="top:646px;right:423px;transform:scaleX(0.91);transform-origin:100% 50%">67,586</div>
<div class="t" style="top:664px;right:423px;transform:scaleX(0.91);transform-origin:100% 50%">31,540</div>
<div class="t" style="top:682px;font-weight:bold;right:423px;transform:scaleX(0.91);transform-origin:100% 50%">155,449</div>
<div class="t" style="top:628px;right:321px;transform:scaleX(0.91);transform-origin:100% 50%">54,874</div>
<div class="t" style="top:646px;right:321px;transform:scaleX(0.91);transform-origin:100% 50%">65,849</div>
<div class="t" style="top:664px;right:321px;transform:scaleX(0.91);transform-origin:100% 50%">30,729</div>
<div class="t" style="top:682px;font-weight:bold;right:321px;transform:scaleX(0.91);transform-origin:100% 50%">151,452</div>
<div class="t" style="top:628px;right:219px;transform:scaleX(0.91);transform-origin:100% 50%">61,227</div>
<div class="t" style="top:646px;right:219px;transform:scaleX(0.91);transform-origin:100% 50%">73,472</div>
<div class="t" style="top:664px;right:219px;transform:scaleX(0.91);transform-origin:100% 50%">34,287</div>
<div class="t" style="top:682px;font-weight:bold;right:219px;transform:scaleX(0.91);transform-origin:100% 50%">168,985</div>
<div class="t" style="top:628px;right:117px;transform:scaleX(0.91);transform-origin:100% 50%">55,208</div>
<div class="t" style="top:646px;right:117px;transform:scaleX(0.91);transform-origin:100% 50%">66,250</div>
<div class="t" style="top:664px;right:117px;transform:scaleX(0.91);transform-origin:100% 50%">30,917</div>
<div class="t" style="top:682px;font-weight:bold;right:117px;transform:scaleX(0.91);transform-origin:100% 50%">152,375</div>
<div class="t" style="top:628px;right:16px;transform:scaleX(0.91);transform-origin:100% 50%">64,232</div>
<div class="t" style="top:646px;right:16px;transform:scaleX(0.91);transform-origin:100% 50%">77,078</div>
<div class="t" style="top:664px;right:16px;transform:scaleX(0.91);transform-origin:100% 50%">35,970</div>
<div class="t" style="top:682px;font-weight:bold;right:16px;transform:scaleX(0.91);transform-origin:100% 50%">177,280</div>
<div class="t" style="top:719px;font-weight:bold;right:1590px;transform:scaleX(0.955);transform-origin:100% 50%">Other Revenue</div>
<div class="t" style="top:737px;right:1590px;transform:scaleX(0.93);transform-origin:100% 50%">Frequency Regulation</div>
<div class="t" style="top:755px;right:1590px;transform:scaleX(0.93);transform-origin:100% 50%">Capacity Market Payments</div>
<div class="t" style="top:773px;right:1590px;transform:scaleX(0.93);transform-origin:100% 50%">Ancillary Services Revenue</div>
<div class="t" style="top:791px;right:1590px;transform:scaleX(0.93);transform-origin:100% 50%">Carbon Credit Revenue</div>
<div class="t" style="top:737px;right:1478px;transform:scaleX(0.91);transform-origin:100% 50%">-</div>
<div class="t" style="top:755px;right:1478px;transform:scaleX(0.91);transform-origin:100% 50%">-</div>
<div class="t" style="top:773px;right:1478px;transform:scaleX(0.91);transform-origin:100% 50%">-</div>
<div class="t" style="top:791px;right:1478px;transform:scaleX(0.91);transform-origin:100% 50%">-</div>
<div class="t" style="top:737px;right:1388px;transform:scaleX(0.91);transform-origin:100% 50%">-</div>
<div class="t" style="top:755px;right:1388px;transform:scaleX(0.91);transform-origin:100% 50%">-</div>
<div class="t" style="top:773px;right:1388px;transform:scaleX(0.91);transform-origin:100% 50%">-</div>
<div class="t" style="top:791px;right:1388px;transform:scaleX(0.91);transform-origin:100% 50%">-</div>
<div class="t" style="top:737px;right:1286px;transform:scaleX(0.91);transform-origin:100% 50%">-</div>
<div class="t" style="top:755px;right:1286px;transform:scaleX(0.91);transform-origin:100% 50%">-</div>
<div class="t" style="top:773px;right:1286px;transform:scaleX(0.91);transform-origin:100% 50%">-</div>
<div class="t" style="top:791px;right:1286px;transform:scaleX(0.91);transform-origin:100% 50%">-</div>
<div class="t" style="top:737px;right:1184px;transform:scaleX(0.91);transform-origin:100% 50%">-</div>
<div class="t" style="top:755px;right:1184px;transform:scaleX(0.91);transform-origin:100% 50%">-</div>
<div class="t" style="top:773px;right:1184px;transform:scaleX(0.91);transform-origin:100% 50%">-</div>
<div class="t" style="top:791px;right:1184px;transform:scaleX(0.91);transform-origin:100% 50%">-</div>
<div class="t" style="top:737px;right:1049px;transform:scaleX(0.91);transform-origin:100% 50%">-</div>
<div class="t" style="top:755px;right:1049px;transform:scaleX(0.91);transform-origin:100% 50%">-</div>
<div class="t" style="top:773px;right:1049px;transform:scaleX(0.91);transform-origin:100% 50%">-</div>
<div class="t" style="top:791px;right:1049px;transform:scaleX(0.91);transform-origin:100% 50%">-</div>
<div class="t" style="top:737px;right:947px;transform:scaleX(0.91);transform-origin:100% 50%">-</div>
<div class="t" style="top:755px;right:947px;transform:scaleX(0.91);transform-origin:100% 50%">-</div>
<div class="t" style="top:773px;right:947px;transform:scaleX(0.91);transform-origin:100% 50%">-</div>
<div class="t" style="top:791px;right:947px;transform:scaleX(0.91);transform-origin:100% 50%">-</div>
<div class="t" style="top:736px;right:831px;transform:scaleX(0.91);transform-origin:100% 50%">1,000</div>
<div class="t" style="top:755px;right:845px;transform:scaleX(0.91);transform-origin:100% 50%">-</div>
<div class="t" style="top:773px;right:845px;transform:scaleX(0.91);transform-origin:100% 50%">-</div>
<div class="t" style="top:790px;right:831px;transform:scaleX(0.91);transform-origin:100% 50%">33,201</div>
<div class="t" style="top:736px;right:729px;transform:scaleX(0.91);transform-origin:100% 50%">1,000</div>
<div class="t" style="top:754px;right:729px;transform:scaleX(0.91);transform-origin:100% 50%">1,500</div>
<div class="t" style="top:773px;right:743px;transform:scaleX(0.91);transform-origin:100% 50%">-</div>
<div class="t" style="top:790px;right:729px;transform:scaleX(0.91);transform-origin:100% 50%">33,146</div>
<div class="t" style="top:736px;right:627px;transform:scaleX(0.91);transform-origin:100% 50%">1,000</div>
<div class="t" style="top:754px;right:627px;transform:scaleX(0.91);transform-origin:100% 50%">1,500</div>
<div class="t" style="top:773px;right:641px;transform:scaleX(0.91);transform-origin:100% 50%">-</div>
<div class="t" style="top:790px;right:627px;transform:scaleX(0.91);transform-origin:100% 50%">21,349</div>
<div class="t" style="top:736px;right:525px;transform:scaleX(0.91);transform-origin:100% 50%">1,000</div>
<div class="t" style="top:754px;right:525px;transform:scaleX(0.91);transform-origin:100% 50%">1,500</div>
<div class="t" style="top:773px;right:539px;transform:scaleX(0.91);transform-origin:100% 50%">-</div>
<div class="t" style="top:790px;right:525px;transform:scaleX(0.91);transform-origin:100% 50%">20,922</div>
<div class="t" style="top:736px;right:423px;transform:scaleX(0.91);transform-origin:100% 50%">1,000</div>
<div class="t" style="top:754px;right:423px;transform:scaleX(0.91);transform-origin:100% 50%">1,500</div>
<div class="t" style="top:773px;right:437px;transform:scaleX(0.91);transform-origin:100% 50%">-</div>
<div class="t" style="top:790px;right:423px;transform:scaleX(0.91);transform-origin:100% 50%">19,149</div>
<div class="t" style="top:736px;right:321px;transform:scaleX(0.91);transform-origin:100% 50%">1,000</div>
<div class="t" style="top:754px;right:321px;transform:scaleX(0.91);transform-origin:100% 50%">1,500</div>
<div class="t" style="top:773px;right:335px;transform:scaleX(0.91);transform-origin:100% 50%">-</div>
<div class="t" style="top:790px;right:321px;transform:scaleX(0.91);transform-origin:100% 50%">18,657</div>
<div class="t" style="top:736px;right:219px;transform:scaleX(0.91);transform-origin:100% 50%">1,000</div>
<div class="t" style="top:754px;right:219px;transform:scaleX(0.91);transform-origin:100% 50%">1,500</div>
<div class="t" style="top:773px;right:233px;transform:scaleX(0.91);transform-origin:100% 50%">-</div>
<div class="t" style="top:790px;right:219px;transform:scaleX(0.91);transform-origin:100% 50%">20,817</div>
<div class="t" style="top:736px;right:117px;transform:scaleX(0.91);transform-origin:100% 50%">1,000</div>
<div class="t" style="top:754px;right:117px;transform:scaleX(0.91);transform-origin:100% 50%">1,500</div>
<div class="t" style="top:772px;right:117px;transform:scaleX(0.91);transform-origin:100% 50%">2,000</div>
<div class="t" style="top:790px;right:117px;transform:scaleX(0.91);transform-origin:100% 50%">18,771</div>
<div class="t" style="top:736px;right:16px;transform:scaleX(0.91);transform-origin:100% 50%">1,000</div>
<div class="t" style="top:754px;right:16px;transform:scaleX(0.91);transform-origin:100% 50%">1,500</div>
<div class="t" style="top:772px;right:16px;transform:scaleX(0.91);transform-origin:100% 50%">2,000</div>
<div class="t" style="top:790px;right:16px;transform:scaleX(0.91);transform-origin:100% 50%">21,839</div>
<div class="t" style="top:827px;font-weight:bold;right:1590px;transform:scaleX(0.955);transform-origin:100% 50%">Net Revenue - Wind Energy Generation</div>
<div class="t unit" style="top:827px;left:318px">USD</div>
<div class="t" style="top:828px;right:1478px;transform:scaleX(0.91);transform-origin:100% 50%">-</div>
<div class="t" style="top:828px;right:1388px;transform:scaleX(0.91);transform-origin:100% 50%">-</div>
<div class="t" style="top:828px;right:1286px;transform:scaleX(0.91);transform-origin:100% 50%">-</div>
<div class="t" style="top:828px;right:1184px;transform:scaleX(0.91);transform-origin:100% 50%">-</div>
<div class="t" style="top:828px;right:1049px;transform:scaleX(0.91);transform-origin:100% 50%">-</div>
<div class="t" style="top:828px;right:947px;transform:scaleX(0.91);transform-origin:100% 50%">-</div>
<div class="t" style="top:826px;font-weight:bold;right:831px;transform:scaleX(0.91);transform-origin:100% 50%">303,715</div>
<div class="t" style="top:826px;font-weight:bold;right:729px;transform:scaleX(0.91);transform-origin:100% 50%">304,710</div>
<div class="t" style="top:826px;font-weight:bold;right:627px;transform:scaleX(0.91);transform-origin:100% 50%">197,149</div>
<div class="t" style="top:826px;font-weight:bold;right:525px;transform:scaleX(0.91);transform-origin:100% 50%">193,261</div>
<div class="t" style="top:826px;font-weight:bold;right:423px;transform:scaleX(0.91);transform-origin:100% 50%">177,098</div>
<div class="t" style="top:826px;font-weight:bold;right:321px;transform:scaleX(0.91);transform-origin:100% 50%">172,609</div>
<div class="t" style="top:826px;font-weight:bold;right:219px;transform:scaleX(0.91);transform-origin:100% 50%">192,302</div>
<div class="t" style="top:826px;font-weight:bold;right:117px;transform:scaleX(0.91);transform-origin:100% 50%">175,646</div>
<div class="t" style="top:826px;font-weight:bold;right:16px;transform:scaleX(0.91);transform-origin:100% 50%">203,619</div>
<div style="position:absolute;left:518px;top:849px;width:4px;height:1px;background:#8a8a9a;"></div>
<div style="position:absolute;left:525px;top:849px;width:2px;height:1px;background:#9aa4b4;"></div>
<div style="position:absolute;left:620px;top:849px;width:4px;height:1px;background:#8a8a9a;"></div>
<div style="position:absolute;left:627px;top:849px;width:2px;height:1px;background:#9aa4b4;"></div>
<div style="position:absolute;left:722px;top:849px;width:4px;height:1px;background:#8a8a9a;"></div>
<div style="position:absolute;left:729px;top:849px;width:2px;height:1px;background:#9aa4b4;"></div>
<div style="position:absolute;left:857px;top:849px;width:4px;height:1px;background:#8a8a9a;"></div>
<div style="position:absolute;left:864px;top:849px;width:2px;height:1px;background:#9aa4b4;"></div>
<div style="position:absolute;left:959px;top:849px;width:4px;height:1px;background:#8a8a9a;"></div>
<div style="position:absolute;left:966px;top:849px;width:2px;height:1px;background:#9aa4b4;"></div>
<div style="position:absolute;left:1061px;top:849px;width:4px;height:1px;background:#8a8a9a;"></div>
<div style="position:absolute;left:1068px;top:849px;width:2px;height:1px;background:#9aa4b4;"></div>
<div style="position:absolute;left:1163px;top:849px;width:4px;height:1px;background:#8a8a9a;"></div>
<div style="position:absolute;left:1170px;top:849px;width:2px;height:1px;background:#9aa4b4;"></div>
<div style="position:absolute;left:1265px;top:849px;width:4px;height:1px;background:#8a8a9a;"></div>
<div style="position:absolute;left:1272px;top:849px;width:2px;height:1px;background:#9aa4b4;"></div>
<div style="position:absolute;left:1367px;top:849px;width:4px;height:1px;background:#8a8a9a;"></div>
<div style="position:absolute;left:1374px;top:849px;width:2px;height:1px;background:#9aa4b4;"></div>
<div style="position:absolute;left:1469px;top:849px;width:4px;height:1px;background:#8a8a9a;"></div>
<div style="position:absolute;left:1476px;top:849px;width:2px;height:1px;background:#9aa4b4;"></div>
<div style="position:absolute;left:1571px;top:849px;width:4px;height:1px;background:#8a8a9a;"></div>
<div style="position:absolute;left:1578px;top:849px;width:2px;height:1px;background:#9aa4b4;"></div>
<div style="position:absolute;left:1673px;top:849px;width:4px;height:1px;background:#8a8a9a;"></div>
<div style="position:absolute;left:1680px;top:849px;width:2px;height:1px;background:#9aa4b4;"></div>
<div style="position:absolute;left:1775px;top:849px;width:4px;height:1px;background:#8a8a9a;"></div>
<div style="position:absolute;left:1782px;top:849px;width:2px;height:1px;background:#9aa4b4;"></div>
<div style="position:absolute;left:1876px;top:849px;width:4px;height:1px;background:#8a8a9a;"></div>
<div style="position:absolute;left:1883px;top:849px;width:2px;height:1px;background:#9aa4b4;"></div>
</div>
<div style="position:absolute;left:0;top:0;width:1890px;height:20px;background:#fff"></div>
<div style="position:absolute;left:0;top:20px;width:21px;height:1px;background:#dadada"></div>
<div style="position:absolute;left:21px;top:20px;width:1869px;height:1px;background:#ababab"></div>
<div style="position:absolute;left:21px;top:1px;width:1px;height:19px;background:#e1e1e1"></div>
<svg style="position:absolute;left:0;top:0" width="21" height="20"><polygon points="6.5,16.5 18,16.5 18,5" fill="#dfdfdf"/></svg>
<div style="position:absolute;left:55px;top:1px;width:1px;height:19px;background:#e1e1e1"></div>
<div class="ch" style="left:22px;width:34px">A</div>
<div style="position:absolute;left:311px;top:1px;width:1px;height:19px;background:#e1e1e1"></div>
<div class="ch" style="left:56px;width:256px">B</div>
<div style="position:absolute;left:349px;top:1px;width:1px;height:19px;background:#e1e1e1"></div>
<div class="ch" style="left:312px;width:38px">C</div>
<div style="position:absolute;left:359px;top:1px;width:1px;height:19px;background:#e1e1e1"></div>
<div class="ch" style="left:350px;width:10px">D</div>
<div style="position:absolute;left:441px;top:1px;width:1px;height:19px;background:#e1e1e1"></div>
<div class="ch" style="left:360px;width:82px">E</div>
<div style="position:absolute;left:531px;top:1px;width:1px;height:19px;background:#e1e1e1"></div>
<div class="ch" style="left:442px;width:90px">F</div>
<div style="position:absolute;left:633px;top:1px;width:1px;height:19px;background:#e1e1e1"></div>
<div class="ch" style="left:532px;width:102px">G</div>
<div style="position:absolute;left:735px;top:1px;width:1px;height:19px;background:#e1e1e1"></div>
<div class="ch" style="left:634px;width:102px">H</div>
<div style="position:absolute;left:870px;top:1px;width:1px;height:19px;background:#e1e1e1"></div>
<div class="ch" style="left:736px;width:135px">I</div>
<div style="position:absolute;left:972px;top:1px;width:1px;height:19px;background:#e1e1e1"></div>
<div class="ch" style="left:871px;width:102px">J</div>
<div style="position:absolute;left:1074px;top:1px;width:1px;height:19px;background:#e1e1e1"></div>
<div class="ch" style="left:973px;width:102px">K</div>
<div style="position:absolute;left:1176px;top:1px;width:1px;height:19px;background:#e1e1e1"></div>
<div class="ch" style="left:1075px;width:102px">L</div>
<div style="position:absolute;left:1278px;top:1px;width:1px;height:19px;background:#e1e1e1"></div>
<div class="ch" style="left:1177px;width:102px">M</div>
<div style="position:absolute;left:1380px;top:1px;width:1px;height:19px;background:#e1e1e1"></div>
<div class="ch" style="left:1279px;width:102px">N</div>
<div style="position:absolute;left:1482px;top:1px;width:1px;height:19px;background:#e1e1e1"></div>
<div class="ch" style="left:1381px;width:102px">O</div>
<div style="position:absolute;left:1584px;top:1px;width:1px;height:19px;background:#e1e1e1"></div>
<div class="ch" style="left:1483px;width:102px">P</div>
<div style="position:absolute;left:1686px;top:1px;width:1px;height:19px;background:#e1e1e1"></div>
<div class="ch" style="left:1585px;width:102px">Q</div>
<div style="position:absolute;left:1788px;top:1px;width:1px;height:19px;background:#e1e1e1"></div>
<div class="ch" style="left:1687px;width:102px">R</div>
<div class="ch" style="left:1789px;width:101px">S</div>
<div style="position:absolute;left:21px;top:21px;width:1px;height:829px;background:#ababab"></div>
<div style="position:absolute;left:0;top:43px;width:21px;height:1px;background:#e1e1e1"></div>
<div class="rh" style="top:21px;height:22px;line-height:22px;color:#444">1</div>
<div style="position:absolute;left:0;top:61px;width:21px;height:1px;background:#e1e1e1"></div>
<div class="rh" style="top:44px;height:17px;line-height:17px;color:#444">2</div>
<div style="position:absolute;left:0;top:79px;width:21px;height:1px;background:#ababab"></div>
<div class="rh" style="top:62px;height:17px;line-height:17px;color:#444">3</div>
<div style="position:absolute;left:0;top:79px;width:21px;height:19px;background:#9fd5b7"></div>
<div style="position:absolute;left:0;top:97px;width:21px;height:1px;background:#ababab"></div>
<div class="rh" style="top:80px;height:17px;line-height:17px;color:#444">4</div>
<div style="position:absolute;left:0;top:115px;width:21px;height:1px;background:#e1e1e1"></div>
<div class="rh" style="top:98px;height:17px;line-height:17px;color:#444">5</div>
<div style="position:absolute;left:0;top:133px;width:21px;height:1px;background:#e1e1e1"></div>
<div class="rh" style="top:116px;height:17px;line-height:17px;color:#444">6</div>
<div style="position:absolute;left:0;top:151px;width:21px;height:1px;background:#e1e1e1"></div>
<div class="rh" style="top:134px;height:17px;line-height:17px;color:#444">7</div>
<div style="position:absolute;left:0;top:169px;width:21px;height:1px;background:#e1e1e1"></div>
<div class="rh" style="top:152px;height:17px;line-height:17px;color:#444">8</div>
<div style="position:absolute;left:0;top:187px;width:21px;height:1px;background:#e1e1e1"></div>
<div class="rh" style="top:170px;height:17px;line-height:17px;color:#444">9</div>
<div style="position:absolute;left:0;top:214px;width:21px;height:1px;background:#e1e1e1"></div>
<div class="rh" style="top:197px;height:17px;line-height:17px;color:#444">11</div>
<div style="position:absolute;left:0;top:232px;width:21px;height:1px;background:#e1e1e1"></div>
<div class="rh" style="top:215px;height:17px;line-height:17px;color:#444">12</div>
<div style="position:absolute;left:0;top:250px;width:21px;height:1px;background:#e1e1e1"></div>
<div class="rh" style="top:233px;height:17px;line-height:17px;color:#444">13</div>
<div style="position:absolute;left:0;top:268px;width:21px;height:1px;background:#e1e1e1"></div>
<div class="rh" style="top:251px;height:17px;line-height:17px;color:#444">14</div>
<div style="position:absolute;left:0;top:286px;width:21px;height:1px;background:#e1e1e1"></div>
<div class="rh" style="top:269px;height:17px;line-height:17px;color:#444">15</div>
<div style="position:absolute;left:0;top:304px;width:21px;height:1px;background:#e1e1e1"></div>
<div class="rh" style="top:287px;height:17px;line-height:17px;color:#444">16</div>
<div style="position:absolute;left:0;top:322px;width:21px;height:1px;background:#e1e1e1"></div>
<div class="rh" style="top:305px;height:17px;line-height:17px;color:#444">17</div>
<div style="position:absolute;left:0;top:340px;width:21px;height:1px;background:#e1e1e1"></div>
<div class="rh" style="top:323px;height:17px;line-height:17px;color:#444">18</div>
<div style="position:absolute;left:0;top:358px;width:21px;height:1px;background:#e1e1e1"></div>
<div class="rh" style="top:341px;height:17px;line-height:17px;color:#444">19</div>
<div style="position:absolute;left:0;top:376px;width:21px;height:1px;background:#e1e1e1"></div>
<div class="rh" style="top:359px;height:17px;line-height:17px;color:#444">20</div>
<div style="position:absolute;left:0;top:394px;width:21px;height:1px;background:#e1e1e1"></div>
<div class="rh" style="top:377px;height:17px;line-height:17px;color:#444">21</div>
<div style="position:absolute;left:0;top:412px;width:21px;height:1px;background:#e1e1e1"></div>
<div class="rh" style="top:395px;height:17px;line-height:17px;color:#444">22</div>
<div style="position:absolute;left:0;top:430px;width:21px;height:1px;background:#e1e1e1"></div>
<div class="rh" style="top:413px;height:17px;line-height:17px;color:#444">23</div>
<div style="position:absolute;left:0;top:448px;width:21px;height:1px;background:#ababab"></div>
<div class="rh" style="top:431px;height:17px;line-height:17px;color:#444">24</div>
<div style="position:absolute;left:0;top:449px;width:21px;height:17px;background:#e1e1e1"></div>
<div style="position:absolute;left:20px;top:448px;width:2px;height:19px;background:#217346"></div>
<div style="position:absolute;left:0;top:466px;width:21px;height:1px;background:#ababab"></div>
<div class="rh" style="top:449px;height:17px;line-height:17px;color:#217346">25</div>
<div style="position:absolute;left:0;top:484px;width:21px;height:1px;background:#e1e1e1"></div>
<div class="rh" style="top:467px;height:17px;line-height:17px;color:#444">26</div>
<div style="position:absolute;left:0;top:502px;width:21px;height:1px;background:#e1e1e1"></div>
<div class="rh" style="top:485px;height:17px;line-height:17px;color:#444">27</div>
<div style="position:absolute;left:0;top:520px;width:21px;height:1px;background:#e1e1e1"></div>
<div class="rh" style="top:503px;height:17px;line-height:17px;color:#444">28</div>
<div style="position:absolute;left:0;top:538px;width:21px;height:1px;background:#e1e1e1"></div>
<div class="rh" style="top:521px;height:17px;line-height:17px;color:#444">29</div>
<div style="position:absolute;left:0;top:556px;width:21px;height:1px;background:#e1e1e1"></div>
<div class="rh" style="top:539px;height:17px;line-height:17px;color:#444">30</div>
<div style="position:absolute;left:0;top:574px;width:21px;height:1px;background:#e1e1e1"></div>
<div class="rh" style="top:557px;height:17px;line-height:17px;color:#444">31</div>
<div style="position:absolute;left:0;top:592px;width:21px;height:1px;background:#e1e1e1"></div>
<div class="rh" style="top:575px;height:17px;line-height:17px;color:#444">32</div>
<div style="position:absolute;left:0;top:610px;width:21px;height:1px;background:#e1e1e1"></div>
<div class="rh" style="top:593px;height:17px;line-height:17px;color:#444">33</div>
<div style="position:absolute;left:0;top:628px;width:21px;height:1px;background:#e1e1e1"></div>
<div class="rh" style="top:611px;height:17px;line-height:17px;color:#444">34</div>
<div style="position:absolute;left:0;top:646px;width:21px;height:1px;background:#e1e1e1"></div>
<div class="rh" style="top:629px;height:17px;line-height:17px;color:#444">35</div>
<div style="position:absolute;left:0;top:664px;width:21px;height:1px;background:#e1e1e1"></div>
<div class="rh" style="top:647px;height:17px;line-height:17px;color:#444">36</div>
<div style="position:absolute;left:0;top:682px;width:21px;height:1px;background:#e1e1e1"></div>
<div class="rh" style="top:665px;height:17px;line-height:17px;color:#444">37</div>
<div style="position:absolute;left:0;top:700px;width:21px;height:1px;background:#e1e1e1"></div>
<div class="rh" style="top:683px;height:17px;line-height:17px;color:#444">38</div>
<div style="position:absolute;left:0;top:718px;width:21px;height:1px;background:#e1e1e1"></div>
<div class="rh" style="top:701px;height:17px;line-height:17px;color:#444">39</div>
<div style="position:absolute;left:0;top:736px;width:21px;height:1px;background:#e1e1e1"></div>
<div class="rh" style="top:719px;height:17px;line-height:17px;color:#444">40</div>
<div style="position:absolute;left:0;top:754px;width:21px;height:1px;background:#e1e1e1"></div>
<div class="rh" style="top:737px;height:17px;line-height:17px;color:#444">41</div>
<div style="position:absolute;left:0;top:772px;width:21px;height:1px;background:#e1e1e1"></div>
<div class="rh" style="top:755px;height:17px;line-height:17px;color:#444">42</div>
<div style="position:absolute;left:0;top:790px;width:21px;height:1px;background:#e1e1e1"></div>
<div class="rh" style="top:773px;height:17px;line-height:17px;color:#444">43</div>
<div style="position:absolute;left:0;top:808px;width:21px;height:1px;background:#e1e1e1"></div>
<div class="rh" style="top:791px;height:17px;line-height:17px;color:#444">44</div>
<div style="position:absolute;left:0;top:826px;width:21px;height:1px;background:#e1e1e1"></div>
<div class="rh" style="top:809px;height:17px;line-height:17px;color:#444">45</div>
<div style="position:absolute;left:0;top:844px;width:21px;height:1px;background:#e1e1e1"></div>
<div class="rh" style="top:827px;height:17px;line-height:17px;color:#444">46</div>
<div class="rh" style="top:845px;height:17px;line-height:17px;color:#444">47</div>
<div style="position:absolute;left:0;top:188px;width:21px;height:8px;overflow:hidden"><div class="rh" style="top:-9px;height:17px;line-height:17px;">10</div></div>
<div style="position:absolute;left:359px;top:21px;width:1px;height:829px;background:#9f9f9f"></div>
<div style="position:absolute;left:21px;top:196px;width:1868px;height:1px;background:#9f9f9f"></div>
<div style="position:absolute;left:1889px;top:20px;width:1px;height:831px;background:#ababab"></div>
<div style="position:absolute;left:1890px;top:0;width:9px;height:851px;background:#fff"></div>
<div style="position:absolute;left:1894px;top:432px;width:5px;height:400px;background:#f0f0f0"></div>
<div style="position:absolute;left:1893px;top:3px;width:1px;height:429px;background:#b4b4b4"></div>
<div style="position:absolute;left:1893px;top:3px;width:6px;height:1px;background:#c8c8c8"></div>
<div style="position:absolute;left:1893px;top:22px;width:6px;height:1px;background:#ababab"></div>
<div style="position:absolute;left:1893px;top:431px;width:6px;height:1px;background:#ababab"></div>
<div style="position:absolute;left:1897px;top:14px;width:2px;height:1px;background:#555"></div>
<div style="position:absolute;left:1893px;top:831px;width:8px;height:19px;background:#fff;border:1px solid #c8c8c8;box-sizing:border-box"></div>
<div style="position:absolute;left:1897px;top:838px;width:2px;height:1px;background:#555"></div>
<div style="position:absolute;left:0;top:850px;width:1890px;height:1px;background:#b4b4b4"></div>
<div style="position:absolute;left:0;top:851px;width:1899px;height:23px;background:#f3f3f3"></div>
<svg style="position:absolute;left:0;top:851px" width="100" height="23"><polygon points="28.5,9 28.5,18 22.5,13.5" fill="#1e6b3c"/><polygon points="52,9 52,18 58,13.5" fill="#1e6b3c"/><rect x="77" y="14" width="2.5" height="2.5" fill="#1e6b3c"/><rect x="82" y="14" width="2.5" height="2.5" fill="#1e6b3c"/><rect x="87" y="14" width="2.5" height="2.5" fill="#1e6b3c"/></svg>
<div style="position:absolute;left:101px;top:853px;width:272px;height:21px;background:#fce4d6;overflow:hidden"><div class="tab" style="top:-1px;left:0;width:272px;position:absolute;">Cash Flow Statement (Monthly)</div></div>
<div style="position:absolute;left:376px;top:853px;width:216px;height:21px;background:#fce4d6;overflow:hidden"><div class="tab" style="top:-1px;left:0;width:216px;position:absolute;">Balance Sheet (Monthly)</div></div>
<div style="position:absolute;left:597px;top:853px;width:216px;height:21px;background:#c6e0b4;overflow:hidden"><div class="tab" style="top:-1px;left:0;width:216px;position:absolute;">Solar Revenue (Monthly)</div></div>
<div style="position:absolute;left:815px;top:850px;width:224px;height:24px;background:linear-gradient(#ffffff 30%,#e6f0e0);border-left:1px solid #a8a8a8;border-right:1px solid #a8a8a8;box-sizing:border-box"></div>
<div class="tab" style="left:815px;width:224px;color:#217346;font-weight:bold">Wind Revenue (Monthly)</div>
<div style="position:absolute;left:1042px;top:853px;width:228px;height:21px;background:#c6e0b4;overflow:hidden"><div class="tab" style="top:-1px;left:0;width:228px;position:absolute;">Bio-Fuel Energy (Monthly)</div></div>
<div style="position:absolute;left:1275px;top:853px;width:20px;height:21px;background:#c6e0b4;overflow:hidden"><div class="tab" style="top:-1px;left:0;width:20px;position:absolute;text-align:left;padding-left:11px">C</div></div>
<div style="position:absolute;left:98px;top:854px;width:1px;height:20px;background:#c6c6c6"></div>
<div style="position:absolute;left:375px;top:854px;width:1px;height:20px;background:#c6c6c6"></div>
<div style="position:absolute;left:595px;top:854px;width:1px;height:20px;background:#c6c6c6"></div>
<div style="position:absolute;left:1040px;top:854px;width:1px;height:20px;background:#c6c6c6"></div>
<div style="position:absolute;left:1272px;top:854px;width:1px;height:20px;background:#c6c6c6"></div>
<svg style="position:absolute;left:1295px;top:851px" width="90" height="23"><rect x="0" y="0" width="90" height="23" fill="#f3f3f3"/><rect x="8" y="14" width="2.5" height="2.5" fill="#1e6b3c"/><rect x="13" y="14" width="2.5" height="2.5" fill="#1e6b3c"/><rect x="18" y="14" width="2.5" height="2.5" fill="#1e6b3c"/><circle cx="43" cy="14" r="9" fill="none" stroke="#666" stroke-width="1.3"/><path d="M43 9.5V18.5M38.5 14H47.5" stroke="#666" stroke-width="1.5"/><rect x="71" y="9" width="2" height="2" fill="#aaa"/><rect x="71" y="13" width="2" height="2" fill="#aaa"/><rect x="71" y="17" width="2" height="2" fill="#aaa"/></svg>
<div style="position:absolute;left:1384px;top:855px;width:504px;height:19px;background:#e6e6e6"></div>
<div style="position:absolute;left:1384px;top:855px;width:19px;height:19px;background:#fff;border:1px solid #c8c8c8;box-sizing:border-box"></div>
<svg style="position:absolute;left:1384px;top:855px" width="19" height="19"><polygon points="12,5 12,13 7,9" fill="#777"/></svg>
<div style="position:absolute;left:1403px;top:855px;width:52px;height:19px;background:#fff;border:1px solid #c8c8c8;box-sizing:border-box"></div>
<div style="position:absolute;left:1869px;top:855px;width:19px;height:19px;background:#fff;border:1px solid #c8c8c8;box-sizing:border-box"></div>
<svg style="position:absolute;left:1869px;top:855px" width="19" height="19"><polygon points="7,5 7,13 12,9" fill="#777"/></svg>
</body></html>
